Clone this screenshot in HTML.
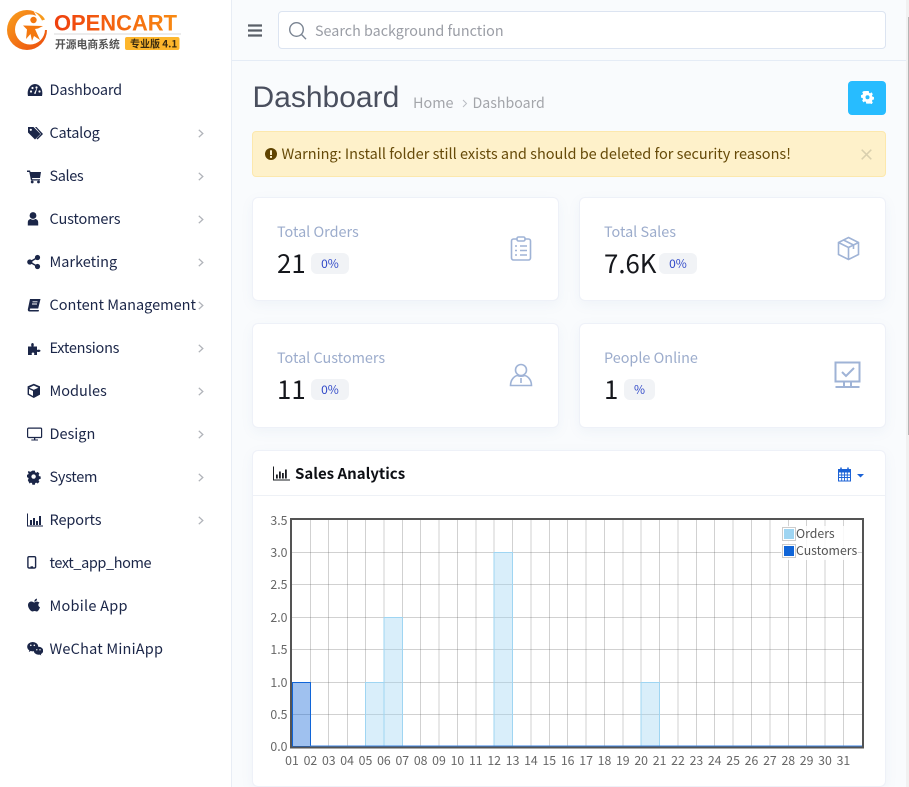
<!DOCTYPE html>
<html><head><meta charset="utf-8"><title>Dashboard</title>
<style>
*{box-sizing:border-box}
html,body{margin:0;padding:0;width:909px;height:787px;overflow:hidden;background:#f9fbfd;font-family:"Noto Sans CJK SC","Liberation Sans",sans-serif;color:#1a2340}
.abs,.nav,.ico,.chev,.card,.lbl,.num,.pill,.ci{position:absolute}
#side{position:absolute;left:0;top:0;width:232px;height:787px;background:#fff;border-right:1px solid #e8edf5}
.nav{left:49.500px;font-size:14.500px;line-height:20px;color:#1b2648;white-space:nowrap}
.ico{left:27px;width:16px;height:16px;fill:#1b2648}
.chev{left:197.500px;width:6px;height:9px;fill:none;stroke:#b0b3b9;stroke-width:1.300}
.card{background:#fff;border:1px solid #eef1f8;border-radius:6px;box-shadow:0 4px 12px rgba(120,140,180,.07)}
.lbl{font-size:14.400px;line-height:20px;color:#9cacCC;white-space:nowrap}
.num{font-size:25.800px;line-height:34px;color:#15171c;font-family:"Noto Sans CJK SC","Liberation Sans",sans-serif;font-weight:400;white-space:nowrap}
.pill{height:21px;border-radius:6px;background:#f1f3f6;color:#2f48c8;font-size:12px;line-height:21px;text-align:center}
.ci{fill:none;stroke:#9fb3d6;stroke-width:1.600}
</style></head><body>

<div id="side">
<svg class="abs" style="left:0;top:0" width="200" height="60" viewBox="0 0 200 60">
<defs>
<linearGradient id="o" x1="0" x2="1" y1="0" y2="0"><stop offset="0" stop-color="#ef3f0e"/><stop offset="1" stop-color="#f88a12"/></linearGradient>
<linearGradient id="r" x1="0" x2="1" y1="0" y2="1"><stop offset="0" stop-color="#f9a11e"/><stop offset="1" stop-color="#ec4a0c"/></linearGradient>
</defs>
<circle cx="27" cy="30" r="20" fill="url(#r)"/>
<circle cx="30" cy="29.500" r="15" fill="#fff"/>
<path d="M33 10H50V30H44z" fill="#fff"/>
<path d="M34 11.500c5 1.500 9 4 11 8l-3 1c-2-4-5-7-8-9z" fill="#f79a1c"/>
<circle cx="33.500" cy="20" r="3.200" fill="#f4780f"/>
<path d="M23 25.500l20 .5-5 2.500-3 .5 5 11-6-4-2 5-1.500-7-4.500 5 1-9.500z" fill="#f4780f"/>
<text x="54" y="30.500" font-family="'Liberation Sans',sans-serif" font-weight="700" font-size="22.500" fill="url(#o)" textLength="123" lengthAdjust="spacingAndGlyphs">OPENCART</text>
<rect x="54" y="33.500" width="127" height="1" fill="#d8d8d8"/>
<text x="55" y="48" font-family="'Noto Sans CJK SC',sans-serif" font-weight="700" font-size="10.800" fill="#555">开源电商系统</text>
<rect x="125" y="37" width="54.500" height="13" rx="2" fill="#fdb62c"/>
<text x="130" y="47.500" font-family="'Noto Sans CJK SC',sans-serif" font-weight="700" font-size="10" fill="#3a2b10">专业版 4.1</text>
</svg>

<svg class="ico" style="top:82px" viewBox="0 0 16 16"><path d="M1 14C-.500 8 3 2 8 2s8.500 6 7 12z"/><circle cx="4" cy="9.500" r="1.100" fill="#fff"/><circle cx="5.500" cy="6" r="1.100" fill="#fff"/><circle cx="9.500" cy="5.500" r="1.100" fill="#fff"/><circle cx="12.500" cy="9.500" r="1.100" fill="#fff"/><path d="M7 11.500l2.500-5 .5.200-1.500 5.300z" fill="#fff"/></svg>
<div class="nav" style="top:80px;letter-spacing:-.15px">Dashboard</div>

<svg class="ico" style="top:125px" viewBox="0 0 16 16"><path d="M1 2h5.500l7 7-5.500 5.500-7-7z"/><path d="M8 2h1.500l6.500 7-5.500 5.500-1-1 4.500-4.500z"/><circle cx="3.800" cy="4.800" r="1.100" fill="#fff"/></svg>
<div class="nav" style="top:123px;letter-spacing:-.2px">Catalog</div>
<svg class="chev" style="top:129px" viewBox="0 0 6 9"><path d="M.8.800l4 3.700-4 3.700"/></svg>

<svg class="ico" style="top:168px" viewBox="0 0 16 16"><path d="M0 2.500h3l.5 1.500H14l-1 6H5l.3 1.200H13v1.300H4L2.300 4H0z"/><circle cx="5.200" cy="14" r="1.400"/><circle cx="11.500" cy="14" r="1.400"/></svg>
<div class="nav" style="top:166px;letter-spacing:-.4px">Sales</div>
<svg class="chev" style="top:172px" viewBox="0 0 6 9"><path d="M.8.800l4 3.700-4 3.700"/></svg>

<svg class="ico" style="top:211px" viewBox="0 0 16 16"><circle cx="6" cy="4.500" r="3.400"/><path d="M.8 14.500v-3c0-2.500 1.700-3.500 3-3.500 1.300 1 3.100 1 4.400 0 1.300 0 3 1 3 3.500v3z"/></svg>
<div class="nav" style="top:209px;letter-spacing:-.15px">Customers</div>
<svg class="chev" style="top:215px" viewBox="0 0 6 9"><path d="M.8.800l4 3.700-4 3.700"/></svg>

<svg class="ico" style="top:254px" viewBox="0 0 16 16"><circle cx="2.800" cy="8" r="2.600"/><circle cx="10.500" cy="3.500" r="2.600"/><circle cx="10.500" cy="12.500" r="2.600"/><path d="M2.800 8l7.700-4.500M2.800 8l7.700 4.500" stroke="#1b2648" stroke-width="1.500" fill="none"/></svg>
<div class="nav" style="top:252px">Marketing</div>
<svg class="chev" style="top:258px" viewBox="0 0 6 9"><path d="M.8.800l4 3.700-4 3.700"/></svg>

<svg class="ico" style="top:297px" viewBox="0 0 16 16"><path d="M3 2h10.500l-2.300 9.500H3.500c-1 0-1 1.500 0 1.500h8.500l-.4 1.500H2.500C1 14.500.5 13 1 11.500z"/><path d="M5.500 4.800h5M5 7h5" stroke="#fff" stroke-width=".9"/></svg>
<div class="nav" style="top:295px">Content Management</div>
<svg class="chev" style="top:301px" viewBox="0 0 6 9"><path d="M.8.800l4 3.700-4 3.700"/></svg>

<svg class="ico" style="top:340px" viewBox="0 0 16 16"><path d="M1 6.500h3.500C4 5 4 3 5.500 3S7 5 6.500 6.500H10V10c1-.6 3.500-.6 3.500.8S11 12.300 10 11.600V15H7c.5-1 .5-2.500-1-2.500S4.500 14 5 15H1z"/></svg>
<div class="nav" style="top:338px;letter-spacing:-.25px">Extensions</div>
<svg class="chev" style="top:344px" viewBox="0 0 6 9"><path d="M.8.800l4 3.700-4 3.700"/></svg>

<svg class="ico" style="top:383px" viewBox="0 0 16 16"><path d="M6.800.8l6.200 2.600v8.200L6.800 15 .6 11.600V3.400z"/><path d="M2.200 4.700L6.800 2.500l4.600 2.200L6.800 6.700zM2 6l4 2v5L2 10.800z" fill="#fff"/></svg>
<div class="nav" style="top:381px">Modules</div>
<svg class="chev" style="top:387px" viewBox="0 0 6 9"><path d="M.8.800l4 3.700-4 3.700"/></svg>

<svg class="ico" style="top:426px" viewBox="0 0 16 16"><rect x=".6" y="2.100" width="14" height="9.400" rx="1" fill="none" stroke="#1b2648" stroke-width="1.200"/><path d="M7 11.500h1.300v2H11v1H4.300v-1H7z"/></svg>
<div class="nav" style="top:424px">Design</div>
<svg class="chev" style="top:430px" viewBox="0 0 6 9"><path d="M.8.800l4 3.700-4 3.700"/></svg>

<svg class="ico" style="top:469px" viewBox="0 0 16 16"><path d="M5.500 1h3l.4 1.900 1.300.6 1.700-1 2.100 2.100-1 1.700.6 1.300 1.900.4v3l-1.900.4-.6 1.300 1 1.700-2.100 2.100-1.700-1-1.300.6-.4 1.900h-3l-.4-1.900-1.300-.6-1.700 1L0 12.400l1-1.700-.6-1.300L-1 9V6l1.400-.4.600-1.300-1-1.700L1.100 1.500l1.700 1 1.300-.6z" transform="translate(.8 .8) scale(.83)"/><circle cx="6.600" cy="7.600" r="2.200" fill="#fff"/></svg>
<div class="nav" style="top:467px;letter-spacing:-.3px">System</div>
<svg class="chev" style="top:473px" viewBox="0 0 6 9"><path d="M.8.800l4 3.700-4 3.700"/></svg>

<svg class="ico" style="top:512px" viewBox="0 0 16 16"><path d="M0 1.500h1v12h15v1H0z"/><path d="M3 8h2v5H3zM6 6h2v7H6zM9 9h2v4H9zM12 4h2v9h-2z"/></svg>
<div class="nav" style="top:510px;letter-spacing:-.1px">Reports</div>
<svg class="chev" style="top:516px" viewBox="0 0 6 9"><path d="M.8.800l4 3.700-4 3.700"/></svg>

<svg class="ico" style="top:555px" viewBox="0 0 16 16"><rect x=".9" y="1.700" width="7.700" height="11.300" rx="1.200" fill="none" stroke="#1b2648" stroke-width="1.400"/><rect x="3.500" y="11.300" width="2.600" height="1.200"/></svg>
<div class="nav" style="top:553px;letter-spacing:-.4px">text_app_home</div>

<svg class="ico" style="top:598px" viewBox="0 0 16 16"><path d="M7.500 4.500c1-.9 2.200-1 3.200-.8 1 .2 1.500.7 1.800 1.100-1.700 1-1.500 3.700.5 4.500-.5 1.500-1.700 4.200-3.200 4.200-.8 0-1.200-.5-2.200-.5s-1.400.5-2.200.5C3.800 13.500 1 10 1 7.300 1 4.500 3 3.500 4.300 3.500c1.300 0 2.400 1 3.200 1z"/><path d="M7.300 3.600c0-1.500 1-2.800 2.700-3 .1 1.700-1.100 3-2.700 3z"/></svg>
<div class="nav" style="top:596px;letter-spacing:.25px">Mobile App</div>

<svg class="ico" style="top:641px" viewBox="0 0 16 16"><ellipse cx="5.700" cy="5.700" rx="5.500" ry="4.700"/><path d="M2.500 8.500l-.7 2.500 2.800-1.500z"/><ellipse cx="11.500" cy="9.700" rx="4.700" ry="4"/><path d="M13.500 12.500l.8 2-2.500-1.200z"/><circle cx="3.800" cy="4.300" r=".8" fill="#fff"/><circle cx="7.300" cy="4.300" r=".8" fill="#fff"/><circle cx="9.800" cy="8.800" r=".7" fill="#fff"/><circle cx="13" cy="8.800" r=".7" fill="#fff"/></svg>
<div class="nav" style="top:639px;letter-spacing:.2px">WeChat MiniApp</div>
</div>

<!-- top bar -->
<div class="abs" style="left:232px;top:60px;width:674px;height:1px;background:#e5ecf6"></div>
<svg class="abs" style="left:248px;top:24px" width="14" height="13" viewBox="0 0 14 13"><path d="M0 1.500h14M0 6.500h14M0 11.500h14" stroke="#5a5f68" stroke-width="2.200"/></svg>
<div class="abs" style="left:278px;top:11px;width:608px;height:38px;background:#fff;border:1px solid #dce4f1;border-radius:4px"></div>
<svg class="abs" style="left:288px;top:21px" width="20" height="20" viewBox="0 0 20 20" fill="none" stroke="#7a8492" stroke-width="1.400"><circle cx="8.500" cy="8.500" r="6.800"/><path d="M13.500 13.500l4.500 4.700"/></svg>
<div class="abs" style="left:315px;top:20.500px;font-size:14.350px;line-height:20px;color:#9a9da5;white-space:nowrap">Search background function</div>

<!-- heading -->
<div class="abs" style="left:252.500px;top:80px;font-family:'Liberation Sans',sans-serif;font-size:30px;line-height:36px;color:#4a4f5e;white-space:nowrap">Dashboard</div>
<div class="abs" style="left:413px;top:93px;font-size:14.400px;line-height:20px;color:#a3a5aa;white-space:nowrap">Home</div>
<svg class="abs" style="left:462px;top:99px" width="6" height="9" viewBox="0 0 6 9"><path d="M1 1l3.500 3.500L1 8" fill="none" stroke="#b9bcc3" stroke-width="1"/></svg>
<div class="abs" style="left:472.500px;top:93px;font-size:14.200px;line-height:20px;color:#a3a5aa;white-space:nowrap">Dashboard</div>
<div class="abs" style="left:848px;top:81px;width:38px;height:34px;background:#27bcff;border-radius:4px"></div>
<svg class="abs" style="left:861px;top:91px" width="13" height="13" viewBox="0 0 13 13"><path d="M5 0h3l.3 1.800 1.300.6L11 1.300l1.700 1.900-1 1.400.5 1.200 1.800.4v2.600l-1.800.4-.5 1.200 1 1.500-1.700 1.800-1.400-1-1.300.5L8 13H5l-.3-1.800-1.300-.5-1.400 1L.3 9.900l1-1.500-.5-1.200L-1 6.800V4.200l1.800-.4.500-1.200-1-1.400L2 .1z" transform="translate(.9 0) scale(.86 .97)" fill="#fff"/><circle cx="6.500" cy="6.300" r="2" fill="#27bcff"/></svg>

<!-- alert -->
<div class="abs" style="left:252px;top:131px;width:634px;height:46px;background:#fef1ca;border:1px solid #fce8ad;border-radius:4px"></div>
<svg class="abs" style="left:265px;top:148px" width="12" height="12" viewBox="0 0 12 12"><circle cx="6" cy="6" r="6" fill="#5f4300"/><rect x="5" y="2.300" width="2" height="4.700" fill="#fef1ca"/><rect x="5" y="8" width="2" height="1.900" fill="#fef1ca"/></svg>
<div class="abs" style="left:281.500px;top:144px;font-size:14.500px;line-height:20px;color:#664a08;white-space:nowrap">Warning: Install folder still exists and should be deleted for security reasons!</div>
<svg class="abs" style="left:861px;top:149px" width="11" height="11" viewBox="0 0 11 11"><path d="M.7.700l9.600 9.600M10.300.700L.7 10.300" stroke="#d9cfae" stroke-width="1.500"/></svg>

<!-- cards -->
<div class="card" style="left:252px;top:197px;width:307px;height:104px"></div>
<div class="card" style="left:579px;top:197px;width:307px;height:104px"></div>
<div class="card" style="left:252px;top:323px;width:307px;height:105px"></div>
<div class="card" style="left:579px;top:323px;width:307px;height:105px"></div>

<div class="lbl" style="left:277px;top:222px">Total Orders</div>
<div class="num" style="left:277px;top:246px">21</div>
<div class="pill" style="left:311px;top:253px;width:38px">0%</div>
<svg class="ci" style="left:510px;top:236px" width="22" height="25" viewBox="0 0 22 25"><rect x="1.500" y="3" width="19" height="21" rx="2"/><rect x="7" y="1" width="8" height="4" rx="1.500" fill="#fff"/><path d="M5 10h2M10 10h7M5 14.500h2M10 14.500h7M5 19h2M10 19h7"/></svg>

<div class="lbl" style="left:604px;top:222px">Total Sales</div>
<div class="num" style="left:604px;top:246px">7.6K</div>
<div class="pill" style="left:659px;top:253px;width:38px">0%</div>
<svg class="ci" style="left:837px;top:236px" width="23" height="25" viewBox="0 0 23 25"><path d="M11.500 1.500l10 5v12l-10 5-10-5v-12zM1.500 6.500l10 5 10-5M11.500 11.500v12M6.500 4l10 5v4"/></svg>

<div class="lbl" style="left:277px;top:348px">Total Customers</div>
<div class="num" style="left:277px;top:372px">11</div>
<div class="pill" style="left:311px;top:379px;width:38px">0%</div>
<svg class="ci" style="left:509px;top:363px" width="24" height="24" viewBox="0 0 24 24"><circle cx="12" cy="7" r="5.500"/><path d="M1.500 22.500c0-6 4-9.500 7-10 2 1 5 1 7 0 3 .5 7 4 7 10zM12 15v5"/></svg>

<div class="lbl" style="left:604px;top:348px">People Online</div>
<div class="num" style="left:604px;top:372px">1</div>
<div class="pill" style="left:624px;top:379px;width:31px">%</div>
<svg class="ci" style="left:834px;top:361px;stroke-width:2" width="28" height="28" viewBox="0 0 28 28"><rect x="1.500" y="1.500" width="24" height="19"/><path d="M8 11l4 4 8-8M10 20.500v5M17 20.500v5M1.500 26h24"/></svg>

<!-- chart card -->
<div class="card" style="left:252px;top:450px;width:634px;height:337px"></div>
<div class="abs" style="left:253px;top:495px;width:632px;height:1px;background:#eef1f6"></div>
<svg class="abs" style="left:273px;top:466px" width="17" height="15" viewBox="0 0 17 15"><path d="M0 .5h1V13.500h16v1H0z" fill="#1a1c22"/><path d="M3 8.500h1.800v4H3zM6 5.500h1.800v7H6zM9 7h1.800v5.500H9zM12 3.500h1.800v9H12z" fill="#1a1c22"/></svg>
<div class="abs" style="left:295px;top:464px;font-size:15px;line-height:20px;font-weight:700;color:#0d0f14;white-space:nowrap;font-family:'Noto Sans CJK SC','Liberation Sans',sans-serif">Sales Analytics</div>
<svg class="abs" style="left:838px;top:467px" width="28" height="15" viewBox="0 0 28 15"><path d="M0 2h13v12.500H0z" fill="#1b62d6"/><path d="M1 5.500h11v8H1z" fill="#fff"/><path d="M1 8h11M1 10.500h11M3.700 5.500v8M6.500 5.500v8M9.300 5.500v8" stroke="#1b62d6" stroke-width=".9"/><path d="M3 .5v3M10 .5v3" stroke="#1b62d6" stroke-width="1.500"/><path d="M19 7h7l-3.500 3.500z" fill="#1b62d6"/></svg>

<svg class="abs" style="left:253px;top:500px" width="632" height="285" viewBox="253 500 632 285" font-family="'Noto Sans CJK SC','Liberation Sans',sans-serif">
<g stroke="#545454" stroke-opacity=".27" stroke-width="1" fill="none">
<path d="M292 552.500H862M292 584.500H862M292 617.500H862M292 649.500H862M292 682.500H862M292 714.500H862"/>
<path d="M310.500 520V746M328.500 520V746M347.500 520V746M365.500 520V746M384 520V746M402.500 520V746M420.500 520V746M439 520V746M457.500 520V746M476 520V746M494 520V746M512.500 520V746M531 520V746M549.500 520V746M567.500 520V746M586 520V746M604.500 520V746M623 520V746M641 520V746M659.500 520V746M678 520V746M696.500 520V746M714.500 520V746M733 520V746M751.500 520V746M770 520V746M788.500 520V746M806.500 520V746M825 520V746M843.500 520V746"/>
</g>
<g fill="#9fd5f2" fill-opacity=".4" stroke="#9fd5f2" stroke-width="1">
<rect x="365.500" y="682.500" width="18.500" height="64"/>
<rect x="384" y="617.500" width="18.500" height="129"/>
<rect x="494" y="552.500" width="18.500" height="194"/>
<rect x="641" y="682.500" width="18.500" height="64"/>
</g>
<rect x="292.500" y="682.500" width="18" height="64" fill="#1065d8" fill-opacity=".4" stroke="#1065d8" stroke-width="1"/>
<path d="M310 746H862" stroke="#3b82e0" stroke-width="1"/>
<rect x="291" y="519" width="572" height="228.500" fill="none" stroke="#545454" stroke-width="2"/>
<rect x="781" y="526" width="77" height="34" fill="#fff" fill-opacity=".85"/>
<rect x="782.500" y="527.500" width="13" height="13" fill="#fff" stroke="#ccc"/>
<rect x="784" y="529" width="10" height="10" fill="#9fd5f2"/>
<rect x="782.500" y="544.500" width="13" height="13" fill="#fff" stroke="#ccc"/>
<rect x="784" y="546" width="10" height="10" fill="#1065d8"/>
<g font-size="12.300" fill="#545454">
<text x="796" y="538">Orders</text>
<text x="796" y="555">Customers</text>
</g>
<g font-size="12.300" fill="#666" text-anchor="end">
<text x="287.500" y="525">3.5</text><text x="287.500" y="557">3.0</text><text x="287.500" y="589">2.5</text><text x="287.500" y="622">2.0</text><text x="287.500" y="654">1.5</text><text x="287.500" y="687">1.0</text><text x="287.500" y="719">0.5</text><text x="287.500" y="751">0.0</text>
</g>
<g font-size="12.300" fill="#666" text-anchor="middle">
<text x="292" y="765">01</text><text x="310.400" y="765">02</text><text x="328.800" y="765">03</text><text x="347.100" y="765">04</text><text x="365.500" y="765">05</text><text x="383.900" y="765">06</text><text x="402.300" y="765">07</text><text x="420.700" y="765">08</text><text x="439" y="765">09</text><text x="457.400" y="765">10</text><text x="475.800" y="765">11</text><text x="494.200" y="765">12</text><text x="512.600" y="765">13</text><text x="530.900" y="765">14</text><text x="549.300" y="765">15</text><text x="567.700" y="765">16</text><text x="586.100" y="765">17</text><text x="604.500" y="765">18</text><text x="622.800" y="765">19</text><text x="641.200" y="765">20</text><text x="659.600" y="765">21</text><text x="678" y="765">22</text><text x="696.400" y="765">23</text><text x="714.700" y="765">24</text><text x="733.100" y="765">25</text><text x="751.500" y="765">26</text><text x="769.900" y="765">27</text><text x="788.300" y="765">28</text><text x="806.600" y="765">29</text><text x="825" y="765">30</text><text x="843.400" y="765">31</text>
</g>
</svg>

<!-- scrollbar -->
<div class="abs" style="left:906px;top:0;width:3px;height:787px;background:#f1f1f1"></div>
<div class="abs" style="left:908px;top:17px;width:1px;height:418px;background:#b5b5b5"></div>
</body></html>
